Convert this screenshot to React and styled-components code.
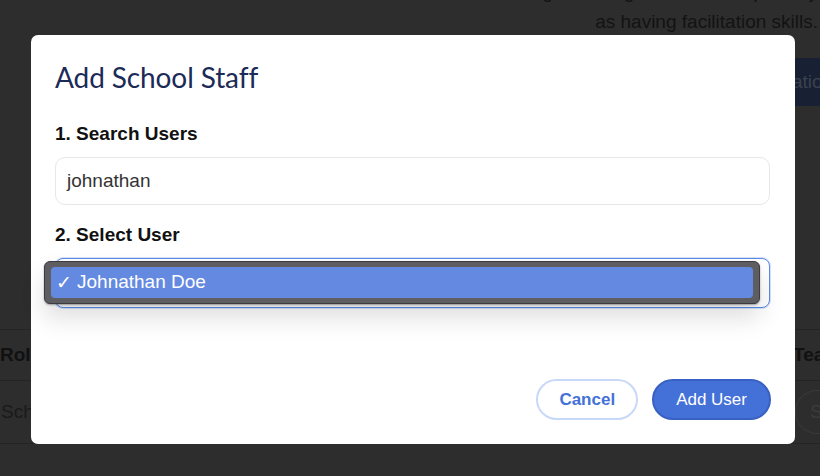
import React from 'react'
import styled, { createGlobalStyle } from 'styled-components'

const GlobalStyle = createGlobalStyle`
  html, body {
    margin: 0;
    padding: 0;
    background: #2d2d2d;
  }
  * {
    box-sizing: border-box;
  }
`

const Page = styled.div`
  position: relative;
  width: 820px;
  height: 476px;
  overflow: hidden;
  background: #2d2d2d;
  font-family: 'Liberation Sans', Arial, sans-serif;
  display: flex;
  flex-direction: column;
`

const BgText = styled.p`
  margin: -23px 0 0 0;
  padding-right: 2px;
  text-align: right;
  font-size: 19px;
  line-height: 30px;
  color: #131313;
  white-space: nowrap;
`

const BgAction = styled.div`
  margin: 21px 0 0 795px;
  height: 48px;
  width: 60px;
  background: #182033;
  color: #3b4150;
  font-size: 19px;
  display: flex;
  align-items: center;
  text-indent: -3px;
`

const BgTable = styled.div`
  margin-top: 223px;
  display: flex;
  flex-direction: column;
`

const BgRow = styled.div`
  display: grid;
  grid-template-columns: 793px 1fr;
  align-items: center;
  height: ${(p) => p.h}px;
  border-top: 1px solid #242424;
  border-bottom: ${(p) => (p.last ? '1px solid #242424' : 'none')};
  font-size: 19px;
  font-weight: ${(p) => (p.head ? 700 : 400)};
  color: ${(p) => (p.head ? '#111' : '#1a1a1a')};
  white-space: nowrap;
`

const BgCell = styled.div`
  padding-left: ${(p) => p.pl || 0}px;
  overflow: hidden;
`

const BgPill = styled.div`
  margin-left: 2px;
  width: 60px;
  height: 44px;
  border: 1px solid #3a3a3a;
  border-radius: 22px;
  display: flex;
  align-items: center;
  padding-left: 14px;
  color: #3c3c3c;
`

const Modal = styled.div`
  position: absolute;
  left: 31px;
  top: 35px;
  width: 764px;
  height: 409px;
  background: #fff;
  border-radius: 7px;
  padding: 26px 24px 24px 24px;
  display: flex;
  flex-direction: column;
`

const Title = styled.h2`
  margin: 0;
  font-family: Lato, 'Open Sans', sans-serif;
  font-weight: 400;
  font-size: 28px;
  line-height: 1.2;
  color: #1b2a57;
  letter-spacing: -0.1px;
`

const Label = styled.label`
  display: block;
  margin-top: ${(p) => p.mt}px;
  font-size: 19px;
  font-weight: 700;
  color: #111;
  line-height: 22px;
`

const TextInput = styled.div`
  margin-top: 12px;
  margin-right: 1px;
  height: 48px;
  border: 1px solid #e7e7e7;
  border-radius: 10px;
  padding-left: 11px;
  display: flex;
  align-items: center;
  font-size: 19px;
  color: #333;
`

const SelectWrap = styled.div`
  position: relative;
  margin-top: 12px;
  margin-right: 1px;
  height: 50px;
`

const SelectBox = styled.div`
  height: 50px;
  border: 1px solid #5a8ae6;
  border-radius: 8px;
  background: #fff;
  box-shadow: 0 0 0 1px rgba(90, 138, 230, 0.25);
`

const Popup = styled.div`
  position: absolute;
  left: -11px;
  right: 10px;
  top: 3px;
  height: 43px;
  background: #5e5d62;
  border: 1px solid #3c3b40;
  border-radius: 6px;
  padding: 5px 6px;
  box-shadow: 0 1px 2px rgba(0, 0, 0, 0.35), 0 14px 24px rgba(0, 0, 0, 0.13);
`

const Option = styled.div`
  height: 31px;
  border-radius: 4px;
  background: #6389e0;
  color: #fff;
  font-size: 19px;
  display: flex;
  align-items: center;
  padding-left: 5px;
  gap: 5px;
`

const Footer = styled.div`
  margin-top: auto;
  display: flex;
  justify-content: flex-end;
  gap: 14px;
`

const Button = styled.button`
  height: 41px;
  border-radius: 21px;
  font-family: 'Liberation Sans', Arial, sans-serif;
  font-size: 17px;
  padding: 0 ${(p) => (p.primary ? 22 : 21)}px;
  font-weight: ${(p) => (p.primary ? 400 : 700)};
  background: ${(p) => (p.primary ? '#4471d8' : '#fff')};
  color: ${(p) => (p.primary ? '#fff' : '#4471d8')};
  border: 2px solid ${(p) => (p.primary ? '#3861c3' : '#c8d8f8')};
  cursor: pointer;
`

export default function App() {
  return (
    <>
      <GlobalStyle />
      <Page>
        <BgText>
          with strong coaching and leadership ability
          <br />
          as having facilitation skills.
        </BgText>
        <BgAction>ation</BgAction>
        <BgTable>
          <BgRow h={51} head>
            <BgCell>Role</BgCell>
            <BgCell>Team</BgCell>
          </BgRow>
          <BgRow h={64} last>
            <BgCell pl={1}>School Staff</BgCell>
            <BgPill>S</BgPill>
          </BgRow>
        </BgTable>

        <Modal>
          <Title>Add School Staff</Title>
          <Label mt={28}>1. Search Users</Label>
          <TextInput>johnathan</TextInput>
          <Label mt={19}>2. Select User</Label>
          <SelectWrap>
            <SelectBox />
            <Popup>
              <Option>
                <span>✓</span>
                <span>Johnathan Doe</span>
              </Option>
            </Popup>
          </SelectWrap>
          <Footer>
            <Button>Cancel</Button>
            <Button primary>Add User</Button>
          </Footer>
        </Modal>
      </Page>
    </>
  )
}
